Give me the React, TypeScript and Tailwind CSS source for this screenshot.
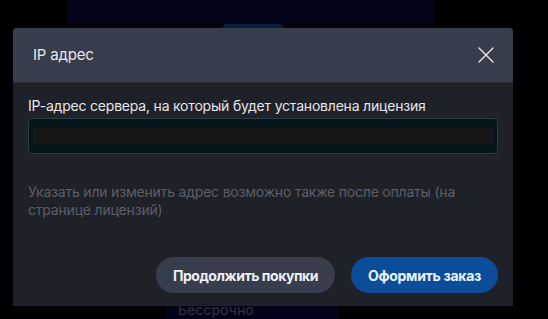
export default function App() {
  return (
    <div className="relative h-[319px] w-[548px] overflow-hidden bg-black font-['Inter',sans-serif]">
      {/* page behind the overlay */}
      <div className="ml-[67px] h-[24px] w-[366px] bg-[#03031a]" />
      <div className="ml-[222px] h-[5px] w-[62px] rounded-t-full bg-[#08203a]" />
      <div className="ml-[166px] mt-[271px] h-[19px] w-[172px] bg-[#02021a] pl-[12px] text-[14px] font-medium leading-[19px] text-[#2b2f36]">
        Бессрочно
      </div>

      {/* modal */}
      <div className="absolute left-[13px] top-[28px] w-[500px] overflow-hidden rounded-t-[4px] bg-[#1f2128]">
        <div className="flex h-[54px] items-center justify-between bg-[#383d4b] pl-[20px] pr-[19px] shadow-[0_1px_0_#272a33]">
          <span className="text-[15px] tracking-[-0.2px] text-[#e6e8ee]">IP адрес</span>
          <svg width="16" height="16" viewBox="0 0 16 16" className="text-[#e8eaf0]">
            <path d="M1 1L15 15M15 1L1 15" stroke="currentColor" strokeWidth="1.4" strokeLinecap="round" />
          </svg>
        </div>
        <div className="px-[15px] pb-[13px] pt-[14px]">
          <label className="block text-[14px] leading-[20px] tracking-[-0.2px] text-[#e4e6eb]">
            IP-адрес сервера, на который будет установлена лицензия
          </label>
          <div className="mt-[2px] flex h-[36px] items-center rounded-[4px] border border-[#2f3a40] bg-[#05161a] px-[4px]">
            <div className="h-[16px] w-full bg-[#161616]" />
          </div>
          <p className="mt-[29px] text-[14px] leading-[18px] tracking-[-0.2px] text-[#5b5f68]">
            Указать или изменить адрес возможно также после оплаты (на
            <br />
            странице лицензий)
          </p>
          <div className="mt-[38px] flex justify-end gap-[16px]">
            <button className="h-[36px] w-[179px] rounded-full bg-[#383d4b] text-[14px] font-bold tracking-[-0.45px] text-[#eef0f4]">
              Продолжить покупки
            </button>
            <button className="h-[36px] w-[147px] rounded-full bg-[#0b4d98] text-[14px] font-bold tracking-[-0.3px] text-[#eef3fa]">
              Оформить заказ
            </button>
          </div>
        </div>
      </div>
    </div>
  );
}
